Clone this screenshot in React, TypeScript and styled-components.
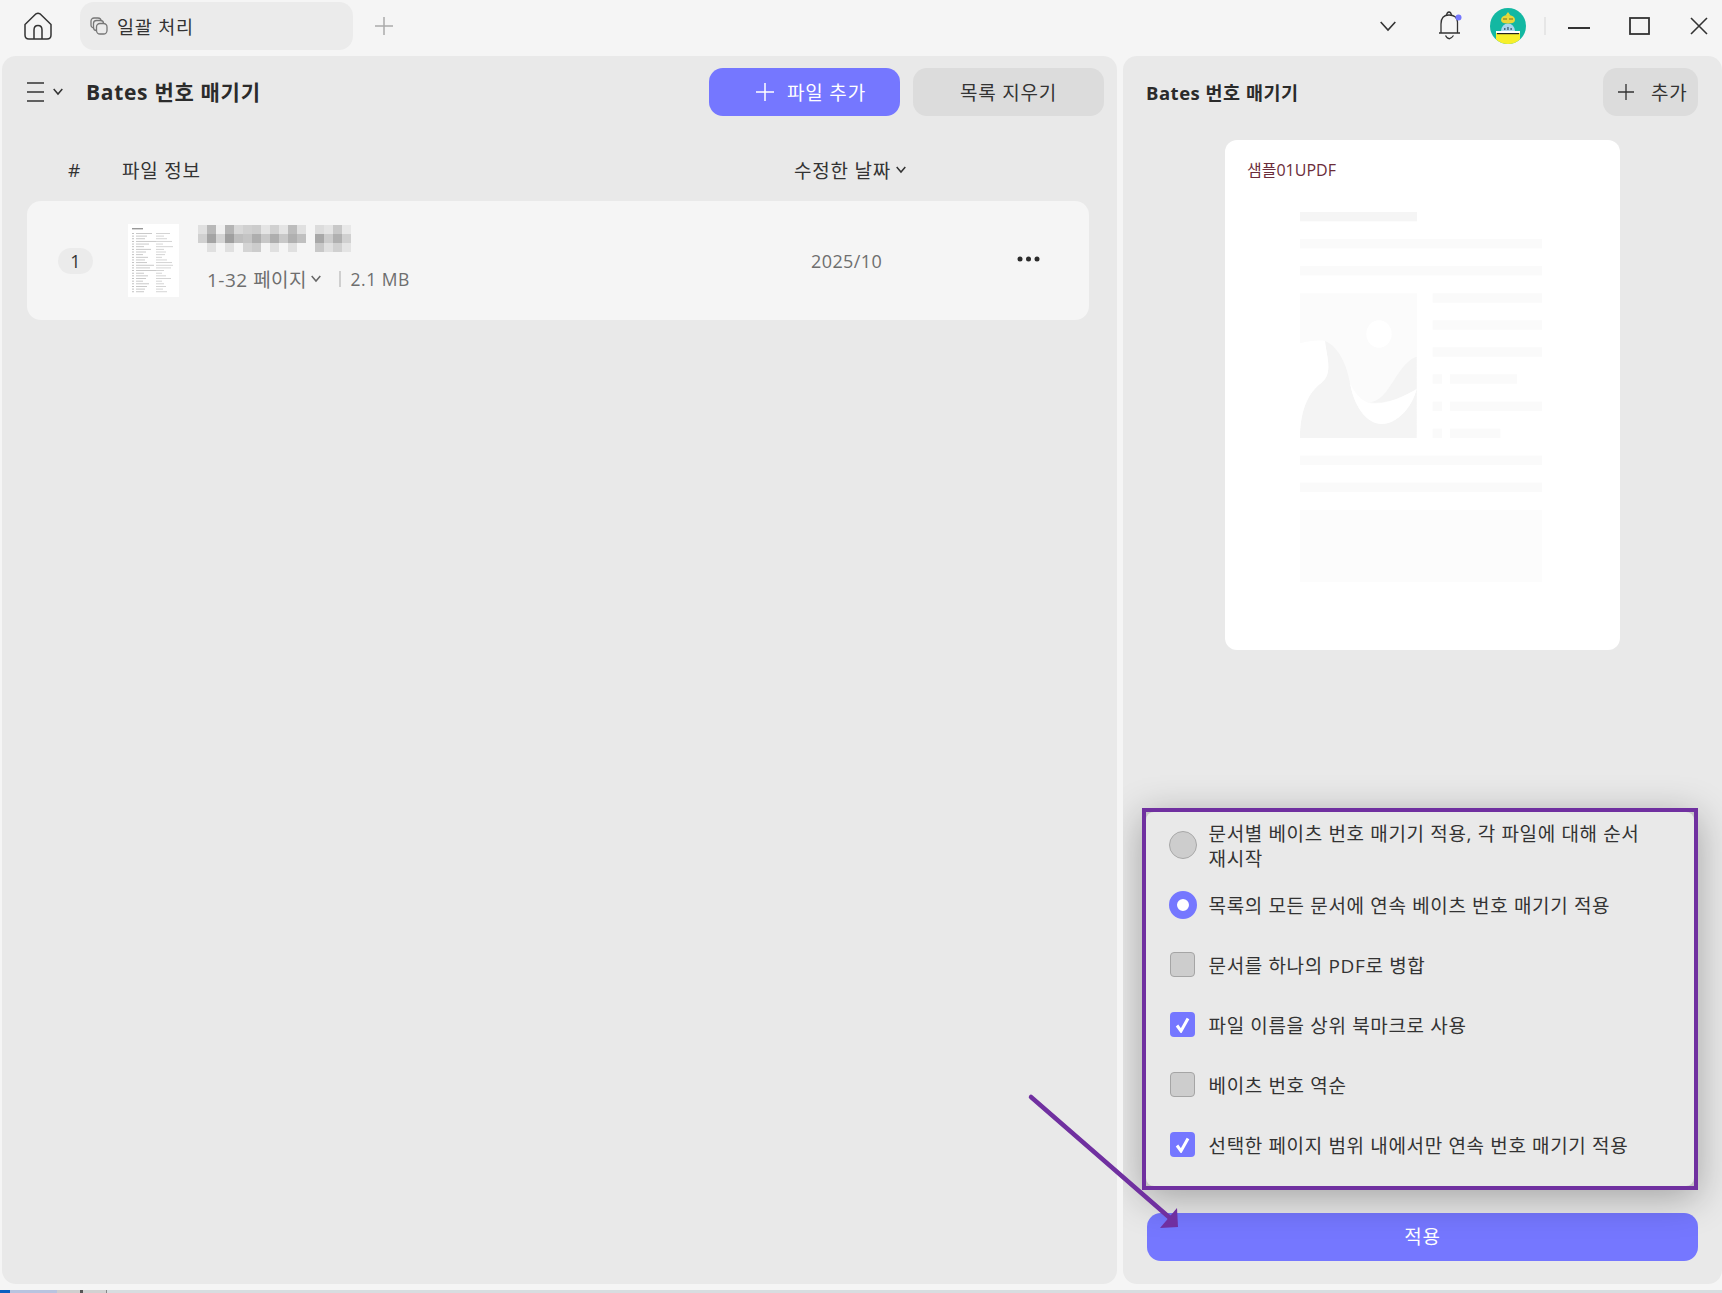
import { createGlobalStyle, styled } from "styled-components"

const FONT = `"Open Sans", "Noto Sans CJK KR", sans-serif`

const GlobalStyle = createGlobalStyle`
    html, body {
        margin: 0;
        padding: 0;
        width: 1722px;
        height: 1293px;
        overflow: hidden;
        background: #f5f5f5;
        font-family: ${FONT};
        color: #333;
    }
    * { box-sizing: border-box; }
`

const Page = styled.div`
    position: relative;
    display: flex;
    flex-direction: column;
    width: 1722px;
    height: 1293px;
`

const TitleBar = styled.header`
    display: flex;
    align-items: flex-start;
    height: 56px;
    flex: none;
`

const HomeButton = styled.div`
    width: 28px;
    height: 28px;
    margin: 12px 28px 0 24px;
`

const Tab = styled.div`
    display: flex;
    align-items: center;
    gap: 9px;
    width: 273px;
    height: 48px;
    margin-top: 2px;
    padding-left: 10px;
    border-radius: 14px;
    background: #ebebeb;
    font-size: 18.5px;
    letter-spacing: 0.8px;
`

const NewTab = styled.div`
    margin: 17px 0 0 22px;
    line-height: 0;
`

const TitleActions = styled.div`
    display: flex;
    align-items: center;
    height: 52px;
    margin-left: auto;
    padding-right: 14px;
`

const IconSlot = styled.div<{ $left: number }>`
    margin-left: ${(p) => p.$left}px;
    line-height: 0;
`

const VDivider = styled.div`
    width: 2px;
    height: 18px;
    margin-left: 18px;
    background: #e6e6e6;
`

const Main = styled.main`
    display: flex;
    gap: 6px;
    height: 1228px;
    padding-left: 2px;
    flex: none;
`

const LeftPanel = styled.section`
    width: 1115px;
    padding: 12px 13px 0 25px;
    border-radius: 14px;
    background: #e9e9e9;
`

const PanelHeader = styled.div`
    display: flex;
    align-items: center;
    height: 48px;
`

const MenuToggle = styled.div`
    display: flex;
    align-items: center;
    gap: 9px;
    width: 59px;
    line-height: 0;
`

const PageTitle = styled.h1`
    margin: 0;
    padding-bottom: 2px;
    font-size: 21px;
    font-weight: 700;
    letter-spacing: 0.7px;
    color: #2b2b2b;
`

const HeaderButtons = styled.div`
    display: flex;
    gap: 13px;
    margin-left: auto;
`

const Button = styled.button<{ $primary?: boolean }>`
    display: flex;
    align-items: center;
    justify-content: center;
    gap: 13px;
    width: 191px;
    height: 48px;
    padding: 0 0 0 ${(p) => (p.$primary ? 13 : 0)}px;
    border: 0;
    border-radius: 14px;
    background: ${(p) => (p.$primary ? "#7577ff" : "#dcdcdc")};
    color: ${(p) => (p.$primary ? "#fff" : "#333")};
    font-family: ${FONT};
    font-size: 19px;
    letter-spacing: 0.8px;
`

const ColumnHeader = styled.div`
    display: flex;
    align-items: center;
    height: 85px;
    padding: 23px 0 0 41px;
    font-size: 19px;
    letter-spacing: 0.8px;
`

const HeaderCell = styled.div<{ $width: number }>`
    display: flex;
    align-items: center;
    gap: 5px;
    width: ${(p) => p.$width}px;
`

const FileRow = styled.div`
    display: flex;
    align-items: center;
    width: 1062px;
    height: 119px;
    padding-left: 31px;
    border-radius: 14px;
    background: #f5f5f5;
`

const IndexPill = styled.div`
    display: flex;
    align-items: center;
    justify-content: center;
    width: 35px;
    height: 26px;
    margin-right: 35px;
    border-radius: 13px;
    background: #ebebeb;
    font-size: 18px;
`

const Thumb = styled.div`
    width: 51px;
    height: 73px;
    margin-right: 19px;
    line-height: 0;
`

const FileInfo = styled.div`
    display: flex;
    flex-direction: column;
    gap: 14px;
    width: 613px;
    margin-top: -4px;
`

const Mosaic = styled.div`
    display: flex;
    gap: 9px;
`

const MosaicGroup = styled.div<{ $cols: number }>`
    display: grid;
    grid-template-columns: repeat(${(p) => p.$cols}, 9px);
    grid-auto-rows: 9px;
`

const MosaicCell = styled.div<{ $tone: string }>`
    background: #${(p) => p.$tone + p.$tone + p.$tone};
`

const FileMeta = styled.div`
    display: flex;
    align-items: center;
    height: 26px;
    padding-left: 9px;
    font-size: 19px;
    letter-spacing: 0.5px;
    color: #6e6e6e;
`

const FileSize = styled.span`
    font-size: 17.5px;
`

const MetaDivider = styled.div`
    width: 1.5px;
    height: 16px;
    margin: 0 10px 0 18px;
    background: #cfcfcf;
`

const DateCell = styled.div`
    width: 206px;
    font-size: 18px;
    color: #6e6e6e;
    letter-spacing: 0.4px;
`

const Dots = styled.svg`
    margin-top: -4px;
`

const RightPanel = styled.section`
    display: flex;
    flex-direction: column;
    width: 599px;
    padding: 12px 24px 23px;
    border-radius: 14px;
    background: #e9e9e9;
    overflow: hidden;
`

const SideTitle = styled.h2`
    margin: 0 0 0 -1px;
    font-size: 18.5px;
    font-weight: 700;
    letter-spacing: 0.5px;
    color: #2b2b2b;
`

const AddButton = styled.button`
    display: flex;
    align-items: center;
    gap: 17px;
    width: 95px;
    height: 48px;
    margin-left: auto;
    padding: 0 0 0 15px;
    border: 0;
    border-radius: 14px;
    background: #dcdcdc;
    color: #333;
    font-family: ${FONT};
    font-size: 19px;
    letter-spacing: 0.8px;
`

const PreviewCard = styled.div`
    width: 395px;
    height: 510px;
    margin: 24px 0 0 78px;
    padding: 18px 0 0 22px;
    border-radius: 12px;
    background: #fff;
`

const PreviewLabel = styled.div`
    height: 24px;
    margin-bottom: 30px;
    font-size: 16px;
    line-height: 24px;
    color: #6b2d3a;
`

const Skeleton = styled.svg`
    display: block;
    margin-left: 53px;
`

const Options = styled.div`
    position: relative;
    z-index: 1;
    width: 556px;
    height: 382px;
    margin: auto 0 23px -5px;
    border: 4.5px solid #7030a0;
    background: #c6c6c6;
    box-shadow: 0 8px 36px rgba(0, 0, 0, 0.3);
`

const OptionsInner = styled.div`
    height: 100%;
    padding: 2.5px 30px 0 22.5px;
    border-radius: 8px;
    background: #e9e9e9;
`

const OptionRow = styled.div`
    display: flex;
    align-items: center;
    gap: 12px;
    height: 60px;
    font-size: 19px;
    line-height: 25px;
    letter-spacing: 0.65px;
`

const OptionLabel = styled.span`
    padding-top: 4px;
    word-break: keep-all;
`

const Marker = styled.div`
    display: flex;
    align-items: center;
    justify-content: center;
    width: 28px;
    height: 28px;
    flex: none;
`

const Radio = styled.div<{ $on?: boolean }>`
    width: 28px;
    height: 28px;
    border-radius: 50%;
    border: ${(p) => (p.$on ? "8px solid #7577ff" : "1.5px solid #a8a8a8")};
    background: ${(p) => (p.$on ? "#fff" : "#cdcdcd")};
`

const Check = styled.div<{ $on?: boolean }>`
    display: flex;
    align-items: center;
    justify-content: center;
    width: 25px;
    height: 25px;
    border-radius: 4px;
    border: ${(p) => (p.$on ? "0" : "1.5px solid #a5a5a5")};
    background: ${(p) => (p.$on ? "#7577ff" : "#cdcdcd")};
`

const ApplyButton = styled.button`
    flex: none;
    width: 551px;
    height: 48px;
    padding: 0 0 2px;
    border: 0;
    border-radius: 14px;
    background: #7577ff;
    color: #fff;
    font-family: ${FONT};
    font-size: 19px;
    letter-spacing: 0.8px;
`

const BottomGap = styled.div`
    height: 6px;
    flex: none;
`

const TaskStrip = styled.div`
    display: flex;
    height: 3px;
    flex: none;
    background: #d8dde0;
`

const TaskSegment = styled.div<{ $width: number; $color: string }>`
    width: ${(p) => p.$width}px;
    background: ${(p) => p.$color};
`

const Arrow = styled.svg`
    position: absolute;
    top: 0;
    left: 0;
    z-index: 2;
    pointer-events: none;
`

const PlusIcon = ({ size = 18, color = "#333" }: { size?: number; color?: string }) => (
    <svg width={size} height={size} viewBox="0 0 18 18" fill="none" stroke={color} strokeWidth={1.5}>
        <path d="M9 0v18M0 9h18" />
    </svg>
)

const Chevron = ({ width = 10, height = 6, color = "#333", sw = 1.5 }: { width?: number; height?: number; color?: string; sw?: number }) => (
    <svg width={width} height={height + 2} viewBox={`0 0 ${width} ${height + 2}`} fill="none" stroke={color} strokeWidth={sw}>
        <path d={`M0.7 1 L${width / 2} ${height} L${width - 0.7} 1`} />
    </svg>
)

const HomeIcon = () => (
    <svg width="28" height="28" viewBox="0 0 28 28" fill="none" stroke="#333" strokeWidth="1.5" strokeLinejoin="round">
        <path d="M1 12.5 L12 1.8 Q14 0.6 16 1.8 L27 12.5 V23 Q27 27 23 27 H5 Q1 27 1 23 Z" />
        <path d="M10 27 V18 Q10 13.5 14 13.5 Q18 13.5 18 18 V27" />
    </svg>
)

const StackIcon = () => (
    <svg width="18" height="18" viewBox="0 0 18 18" fill="none" stroke="#777" strokeWidth="1.3">
        <rect x="1" y="1" width="10" height="10" rx="3" />
        <rect x="3.5" y="3.5" width="10" height="10" rx="3" fill="#ebebeb" />
        <rect x="6.5" y="6.5" width="10.5" height="10.5" rx="3.5" fill="#ebebeb" />
    </svg>
)

const BellIcon = () => (
    <svg width="24" height="30" viewBox="0 0 24 30" fill="none" stroke="#333" strokeWidth="1.3">
        <path d="M1 22 H22 M3 22 V13 Q3 4 11 4 Q19 4 19.5 11 V22" />
        <path d="M8.5 4.5 Q9 1 11 1 Q13 1 13.5 4.5" />
        <path d="M7.5 24.5 Q11 31 15.5 24.5" />
        <circle cx="20.5" cy="6.5" r="3" fill="#7577ff" stroke="none" />
    </svg>
)

const Avatar = () => (
    <svg width="36" height="36" viewBox="0 0 36 36">
        <defs>
            <clipPath id="avatar-clip">
                <circle cx="18" cy="18" r="18" />
            </clipPath>
        </defs>
        <g clipPath="url(#avatar-clip)">
            <rect width="36" height="36" fill="#13b8a2" />
            <path d="M6 25 H30 V36 H6 Z" fill="#f7ef2a" />
            <path d="M11 23 Q12 15.5 18 15.5 Q24 15.5 25 23 Z" fill="#a9d6ee" />
            <path d="M14 20 h1.5 v2 h-1.5z M17.2 19 h1.5 v3 h-1.5z M20.4 20 h1.5 v2 h-1.5z" fill="#4a6a80" />
            <rect x="6" y="23" width="24" height="2" fill="#fff" />
            <rect x="7" y="25" width="22" height="1.2" fill="#222" />
            <path d="M11 12 Q11 7.5 18 7 Q25 7.5 25 12 Q25 15.5 18 15.5 Q11 15.5 11 12 Z" fill="#e9d83a" />
            <path d="M15.5 7.5 L18 4 L20.5 7.5 Z" fill="#e9d83a" />
            <path d="M13 11 H17 M19 11 H23" stroke="#7a6a18" strokeWidth="1" />
        </g>
    </svg>
)

const ThumbArt = () => {
    const left = [16, 11, 9, 20, 13, 8, 15, 10, 7, 12, 9, 11, 18, 14, 20, 8, 12, 10, 7, 13, 11, 9, 8]
    const right = [14, 8, 11, 16, 7, 17, 8, 10, 9, 6, 11, 16, 17, 15, 8, 6, 10, 15, 6, 8, 10, 7, 11]
    return (
        <svg width="51" height="73" viewBox="0 0 51 73">
            <rect width="51" height="73" fill="#fff" />
            <rect x="4" y="4" width="11" height="1.4" fill="#999" />
            {left.map((w, i) => (
                <g key={i}>
                    <rect x="4" y={9 + i * 2.65} width="2" height="0.9" fill="#bbb" />
                    <rect x="8" y={9 + i * 2.65} width={w} height="0.9" fill="#c4c4c4" />
                    <rect x="28" y={9 + i * 2.65} width={right[i]} height="0.9" fill="#d0d0d0" />
                </g>
            ))}
        </svg>
    )
}

const SkeletonArt = () => {
    const bars = [
        [300, 36, 351, "#f5f5f5"],
        [300, 117, 726, "#fafafa"],
        [300, 198, 726, "#fafafa"],
        [698, 280, 328, "#fafafa"],
        [698, 361, 328, "#fafafa"],
        [698, 442, 328, "#fafafa"],
        [698, 523, 28, "#fafafa"],
        [750, 523, 201, "#fafafa"],
        [698, 605, 28, "#fafafa"],
        [750, 605, 276, "#fafafa"],
        [698, 686, 28, "#fafafa"],
        [750, 686, 151, "#fafafa"],
        [300, 767, 726, "#fafafa"],
        [300, 848, 726, "#fafafa"],
    ] as const
    return (
        <Skeleton width="242" height="370" viewBox="300 36 726 1110">
            {bars.map(([x, y, w, fill]) => (
                <rect key={`${x}-${y}`} x={x} y={y} width={w} height="28" fill={fill} />
            ))}
            <rect x="300" y="930" width="726" height="216" fill="#fcfcfc" />
            <rect x="300" y="280" width="351" height="434" fill="#fbfbfb" />
            <ellipse cx="537" cy="402" rx="38" ry="41" fill="#fff" />
            <path d="M300 714 C300 640 320 580 365 548 C400 520 380 470 375 423 C420 440 445 510 450 550 C465 630 505 672 545 672 C590 672 635 625 650 567 L650 714 Z" fill="#f4f4f4" />
            <path d="M300 430 C330 422 355 420 375 423 C380 470 400 520 365 548 C320 580 300 640 300 714 Z" fill="#fff" />
            <path d="M650 470 C590 490 570 600 510 607 C560 615 610 590 650 567 Z" fill="#f4f4f4" />
            <path d="M450 550 C470 590 490 605 510 610 C560 615 610 590 650 567 C635 625 590 672 545 672 C505 672 465 630 450 550 Z" fill="#fff" />
        </Skeleton>
    )
}

const CheckMark = () => (
    <svg width="15" height="16" viewBox="0 0 15 16" fill="none" stroke="#fff" strokeWidth="3">
        <path d="M2 8.5 L6 14 L13 1.5" />
    </svg>
)

const mosaic = {
    first: "e0 b8 f0 b4 d8 d0 cc e4 d0 e4 bc e0 d0 a4 d4 9f be c4 ae c8 ae c8 b0 c0 f5 e0 f5 e0 f5 d4 cc f5 e0 f5 e0 f5".split(" "),
    second: "dc e4 c8 e8 a8 cc b0 d0 c8 e0 d0 e4".split(" "),
}

const options = [
    { kind: "radio", on: false, label: "문서별 베이츠 번호 매기기 적용, 각 파일에 대해 순서 재시작" },
    { kind: "radio", on: true, label: "목록의 모든 문서에 연속 베이츠 번호 매기기 적용" },
    { kind: "check", on: false, label: "문서를 하나의 PDF로 병합" },
    { kind: "check", on: true, label: "파일 이름을 상위 북마크로 사용" },
    { kind: "check", on: false, label: "베이츠 번호 역순" },
    { kind: "check", on: true, label: "선택한 페이지 범위 내에서만 연속 번호 매기기 적용" },
]

export default function App() {
    return (
        <Page>
            <GlobalStyle />
            <TitleBar>
                <HomeButton>
                    <HomeIcon />
                </HomeButton>
                <Tab>
                    <StackIcon />
                    일괄 처리
                </Tab>
                <NewTab>
                    <PlusIcon color="#aaa" />
                </NewTab>
                <TitleActions>
                    <Chevron width={16} height={9} sw={1.6} />
                    <IconSlot $left={42}>
                        <BellIcon />
                    </IconSlot>
                    <IconSlot $left={28}>
                        <Avatar />
                    </IconSlot>
                    <VDivider />
                    <IconSlot $left={22}>
                        <svg width="22" height="2" viewBox="0 0 22 2">
                            <rect width="22" height="2" fill="#333" />
                        </svg>
                    </IconSlot>
                    <IconSlot $left={39}>
                        <svg width="21" height="18" viewBox="0 0 21 18" fill="none" stroke="#333" strokeWidth="1.8">
                            <rect x="1" y="1" width="19" height="16" />
                        </svg>
                    </IconSlot>
                    <IconSlot $left={40}>
                        <svg width="18" height="18" viewBox="0 0 18 18" fill="none" stroke="#333" strokeWidth="1.6">
                            <path d="M1 1 L17 17 M17 1 L1 17" />
                        </svg>
                    </IconSlot>
                </TitleActions>
            </TitleBar>

            <Main>
                <LeftPanel>
                    <PanelHeader>
                        <MenuToggle>
                            <svg width="17" height="20" viewBox="0 0 17 20" fill="none" stroke="#333" strokeWidth="1.3">
                                <path d="M0 1h17M0 10h17M0 19h17" />
                            </svg>
                            <Chevron />
                        </MenuToggle>
                        <PageTitle>Bates 번호 매기기</PageTitle>
                        <HeaderButtons>
                            <Button $primary>
                                <PlusIcon color="#fff" />
                                파일 추가
                            </Button>
                            <Button>목록 지우기</Button>
                        </HeaderButtons>
                    </PanelHeader>

                    <ColumnHeader>
                        <HeaderCell $width={54}>#</HeaderCell>
                        <HeaderCell $width={672}>파일 정보</HeaderCell>
                        <HeaderCell $width={130}>
                            수정한 날짜
                            <Chevron />
                        </HeaderCell>
                    </ColumnHeader>

                    <FileRow>
                        <IndexPill>1</IndexPill>
                        <Thumb>
                            <ThumbArt />
                        </Thumb>
                        <FileInfo>
                            <Mosaic>
                                <MosaicGroup $cols={12}>
                                    {mosaic.first.map((tone, i) => (
                                        <MosaicCell key={i} $tone={tone} />
                                    ))}
                                </MosaicGroup>
                                <MosaicGroup $cols={4}>
                                    {mosaic.second.map((tone, i) => (
                                        <MosaicCell key={i} $tone={tone} />
                                    ))}
                                </MosaicGroup>
                            </Mosaic>
                            <FileMeta>
                                1-32 페이지
                                <IconSlot $left={4}>
                                    <Chevron color="#666" />
                                </IconSlot>
                                <MetaDivider />
                                <FileSize>2.1 MB</FileSize>
                            </FileMeta>
                        </FileInfo>
                        <DateCell>2025/10</DateCell>
                        <Dots width="23" height="6" viewBox="0 0 23 6" fill="#2b2b2b">
                            <circle cx="3" cy="3" r="2.5" />
                            <circle cx="11.5" cy="3" r="2.5" />
                            <circle cx="20" cy="3" r="2.5" />
                        </Dots>
                    </FileRow>
                </LeftPanel>

                <RightPanel>
                    <PanelHeader>
                        <SideTitle>Bates 번호 매기기</SideTitle>
                        <AddButton>
                            <PlusIcon size={16} />
                            추가
                        </AddButton>
                    </PanelHeader>

                    <PreviewCard>
                        <PreviewLabel>샘플01UPDF</PreviewLabel>
                        <SkeletonArt />
                    </PreviewCard>

                    <Options>
                        <OptionsInner>
                            {options.map((o) => (
                                <OptionRow key={o.label}>
                                    <Marker>
                                        {o.kind === "radio" ? (
                                            <Radio $on={o.on} />
                                        ) : (
                                            <Check $on={o.on}>{o.on && <CheckMark />}</Check>
                                        )}
                                    </Marker>
                                    <OptionLabel>{o.label}</OptionLabel>
                                </OptionRow>
                            ))}
                        </OptionsInner>
                    </Options>

                    <ApplyButton>적용</ApplyButton>
                </RightPanel>
            </Main>

            <BottomGap />
            <TaskStrip>
                <TaskSegment $width={10} $color="#0a5fc0" />
                <TaskSegment $width={47} $color="#b8c4e0" />
                <TaskSegment $width={23} $color="#cfcfcf" />
                <TaskSegment $width={3} $color="#555" />
                <TaskSegment $width={23} $color="#d2d2d2" />
                <TaskSegment $width={1} $color="#888" />
            </TaskStrip>

            <Arrow width="1722" height="1293" viewBox="0 0 1722 1293">
                <path d="M1031 1097 L1170 1218" stroke="#7030a0" strokeWidth="4.5" strokeLinecap="round" />
                <path d="M1177 1208 L1160 1228 L1178 1227 Z" fill="#7030a0" />
            </Arrow>
        </Page>
    )
}
